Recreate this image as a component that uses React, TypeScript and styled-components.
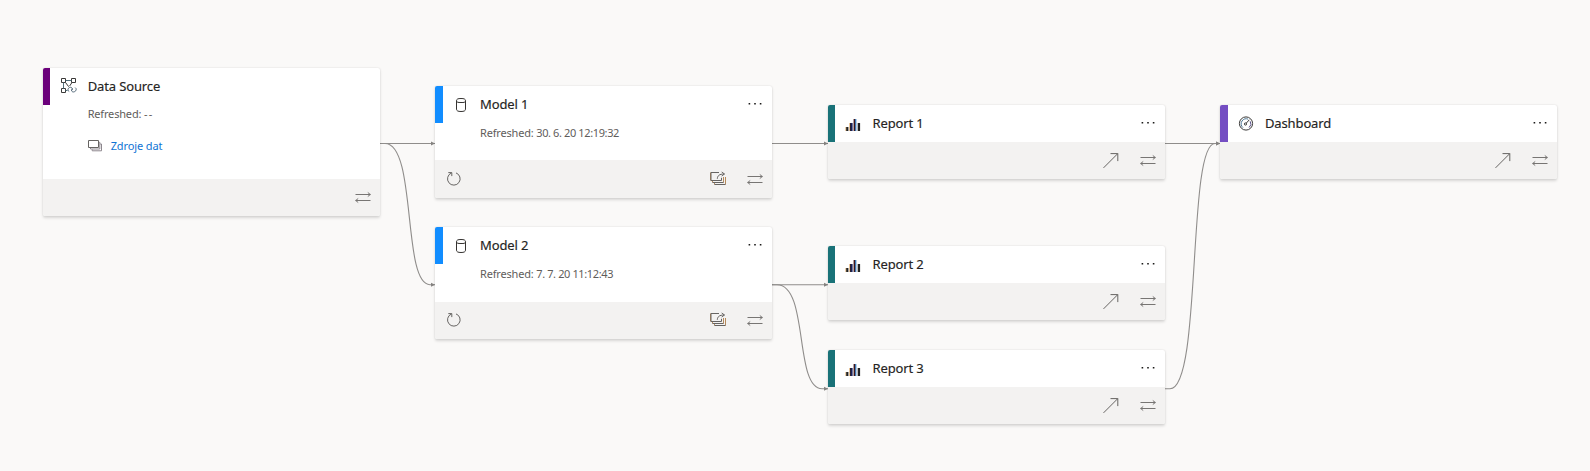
import React from "react";
import styled, { createGlobalStyle } from "styled-components";

const GlobalStyle = createGlobalStyle`
  * { box-sizing: border-box; }
  body { margin: 0; background: #faf9f8; }
`;

const Canvas = styled.main`
  position: relative;
  width: 1590px;
  height: 471px;
  overflow: hidden;
  background: #faf9f8;
  font-family: "Noto Sans", "Open Sans", sans-serif;
`;

const Links = styled.svg`
  position: absolute;
  inset: 0;
  fill: none;
  stroke: #8f8d8b;
  stroke-width: 1.1;
`;

const Card = styled.article<{ $x: number; $y: number; $h: number }>`
  position: absolute;
  left: ${(p) => p.$x}px;
  top: ${(p) => p.$y}px;
  width: 337px;
  height: ${(p) => p.$h}px;
  display: flex;
  flex-direction: column;
  overflow: hidden;
  border-radius: 2px;
  background: #fff;
  box-shadow: 0 1.5px 3px rgba(0, 0, 0, 0.14), 0 0 1.5px rgba(0, 0, 0, 0.1);
`;

const Header = styled.header`
  display: flex;
  flex: 0 0 37px;
  height: 37px;
`;

const Accent = styled.span<{ $color: string }>`
  width: 7.5px;
  background: ${(p) => p.$color};
`;

const TypeIcon = styled.span`
  display: flex;
  align-items: center;
  justify-content: center;
  width: 37.5px;
  padding-right: 1.5px;
`;

const Title = styled.h2`
  flex: 1;
  margin: 0;
  color: #252423;
  font-size: 13px;
  font-weight: 400;
  letter-spacing: -0.13px;
  line-height: 37px;
  white-space: nowrap;
  -webkit-text-stroke: 0.15px #252423;
`;

const Action = styled.button`
  display: flex;
  align-items: center;
  justify-content: center;
  width: 33px;
  height: 36px;
  padding: 0 1px 0 0;
  border: 0;
  background: none;
`;

const Details = styled.div<{ $raised: boolean }>`
  flex: 1;
  margin-top: ${(p) => (p.$raised ? -1 : 0)}px;
  padding-left: 45px;
`;

const Refreshed = styled.p`
  margin: 0;
  color: #5f5d5b;
  font-size: 11px;
  letter-spacing: -0.18px;
  line-height: 20px;
  white-space: nowrap;
`;

const Timestamp = styled.time<{ $empty: boolean }>`
  letter-spacing: ${(p) => (p.$empty ? 1.2 : -0.38)}px;
`;

const SourceLink = styled.a`
  display: flex;
  align-items: center;
  gap: 9px;
  margin-top: 12px;
  color: #1074d4;
  font-size: 11px;
  letter-spacing: -0.12px;
  line-height: 20px;
`;

const Footer = styled.footer<{ $h: number }>`
  display: flex;
  flex: 0 0 ${(p) => p.$h}px;
  gap: 4px;
  height: ${(p) => p.$h}px;
  align-items: flex-end;
  padding: 0 0 1px 3px;
  background: #f3f2f1;
`;

const Spacer = styled.span`
  flex: 1;
`;

const Glyph = styled.svg<{ $color?: string }>`
  display: block;
  flex: none;
  overflow: visible;
  fill: none;
  stroke: ${(p) => p.$color ?? "#666462"};
  stroke-width: 1;
`;

const SourceIcon = () => (
  <Glyph width="16" height="16" $color="#3b3a39">
    <g transform="translate(1 0)">
      <path d="M.5.5h4v4h-4zM10.5.5h4v4h-4zM.5 10.5h4v4h-4z" />
      <path d="M4.5 2.5h6M2.5 4.5v6M4.5 12.5h2" stroke="#52707c" />
      <path d="M4.5 4.5l3.2 4.2M11 4.5L8.6 8" />
      <path d="M8.2 13.5c-1.7-.6-1.7-3 .1-3.9 1.5-.8 3 0 3 1.4 0 .8-.6 1.3-1.3 1.6M14.2 9.6c1.5 1 1.3 3.2-.5 4-1.5.8-3 .2-3.1-1.2 0-.8.5-1.4 1.2-1.7" stroke="#526878" />
    </g>
  </Glyph>
);

const ModelIcon = () => (
  <Glyph width="12" height="14" $color="#353331">
    <path d="M1.5 2.8v8.4M10.5 2.8v8.4" />
    <path d="M1.5 2.8C1.5 1 3 .5 6 .5s4.5.5 4.5 2.3S9 4.5 6 4.5s-4.5-.1-4.5-1.7M1.5 11.2c0 1.6 1.5 2.3 4.5 2.3s4.5-.7 4.5-2.3" />
  </Glyph>
);

const ReportIcon = () => (
  <Glyph width="16" height="14">
    <g stroke="none" transform="translate(0 1)">
      <path fill="#d99f58" d="M.5 9h.8v4H.5zM4.4 5h.7v8h-.7z" />
      <path fill="#242322" d="M1.2 9h2.2v4H1.2zM12.7 5h2.4v8h-2.4z" />
      <path fill="#33241f" d="M5 5h1v8H5z" />
      <path fill="#17215d" d="M5.8 5h1.8v8H5.8z" />
      <path fill="#41151a" d="M8.6 1h1.6v12H8.6z" />
      <path fill="#1765ae" d="M10.2 1h1.1v12h-1.1z" />
    </g>
  </Glyph>
);

const GaugeIcon = () => (
  <Glyph width="16" height="16" $color="#3b3a39">
    <circle cx="8" cy="7.5" r="6.6" />
    <path d="M5 11.6A4.8 4.8 0 0 1 4 5c1.5-2.3 4-2.8 6.2-1.8" stroke="#4f7896" />
    <path d="M12.2 5.3a4.8 4.8 0 0 1-1.2 6.2" stroke="#5b528a" />
    <circle cx="7.5" cy="8" r="1.1" />
    <path d="M8.3 7.1l3-3.3" />
  </Glyph>
);

const MoreIcon = () => (
  <Glyph width="14" height="2">
    <path stroke="none" fill="#1b1a19" d="M.6 0h1.6v1.5H.6zM6.2 0h1.6v1.5H6.2zM11.8 0h1.6v1.5h-1.6z" />
  </Glyph>
);

const LineageIcon = () => (
  <Glyph width="16" height="10" $color="#777573">
    <path d="M.5 2.5h15M12.8.5l2.5 2-2.5 2M15.5 8.5h-15M3.2 6.5l-2.5 2 2.5 2" />
  </Glyph>
);

const OpenIcon = () => (
  <Glyph width="16" height="14">
    <path d="M.5 14.9L14.7.7M7.5.6h7.3v7.5" />
  </Glyph>
);

const RefreshIcon = () => (
  <Glyph width="14" height="14">
    <path d="M4.4 1A6.3 6.3 0 1 0 9 .9M1.3.6h3.5v3.5" />
  </Glyph>
);

const ImpactIcon = () => (
  <Glyph width="16" height="14">
    <path d="M.5.5v8M2.5 8.5v2M13.5 10.5V5M4.5 10.5v2M15.5 12.5V5" stroke="#b58a5c" />
    <path d="M9 .5H1v8h10.5V5.8M2.5 10.5h11M4.5 12.5h11" />
    <path d="M7.3 6.8c.2-3 1.8-4.8 7-4.8M11.7 0l2.8 2-2.8 2" />
  </Glyph>
);

const StackIcon = () => (
  <Glyph width="14" height="12">
    <path d="M2.5 7.7v1.3h9.3V2.3h-1.2M4.2 9.4v1.4h9.3V4h-1.4" stroke="#8d878e" />
    <path d="M.5.5h10v7H.5z" />
  </Glyph>
);

type Kind = "source" | "model" | "report" | "dashboard";

const kinds = {
  source: { color: "#6b007b", icon: <SourceIcon /> },
  model: { color: "#118dff", icon: <ModelIcon /> },
  report: { color: "#197278", icon: <ReportIcon /> },
  dashboard: { color: "#744ec2", icon: <GaugeIcon /> },
};

interface NodeProps {
  kind: Kind;
  title: string;
  x: number;
  y: number;
  h: number;
  footer?: number;
  refreshed?: string;
  link?: string;
}

function Node({ kind, title, x, y, h, footer = 37, refreshed, link }: NodeProps) {
  return (
    <Card $x={x} $y={y} $h={h}>
      <Header>
        <Accent $color={kinds[kind].color} />
        <TypeIcon>{kinds[kind].icon}</TypeIcon>
        <Title>{title}</Title>
        {kind !== "source" && <Action aria-label="More options"><MoreIcon /></Action>}
      </Header>
      {refreshed && (
        <Details $raised={kind === "source"}>
          <Refreshed>Refreshed: <Timestamp $empty={refreshed === "--"}>{refreshed}</Timestamp></Refreshed>
          {link && <SourceLink><StackIcon />{link}</SourceLink>}
        </Details>
      )}
      <Footer $h={footer}>
        {kind === "model" && <Action aria-label="Refresh"><RefreshIcon /></Action>}
        <Spacer />
        {kind === "model" && <Action aria-label="Impact"><ImpactIcon /></Action>}
        {(kind === "report" || kind === "dashboard") && <Action aria-label="Open"><OpenIcon /></Action>}
        <Action aria-label="Show lineage"><LineageIcon /></Action>
      </Footer>
    </Card>
  );
}

const paths = [
  "M380 143.5H435",
  "M380 143.5h5C417 143.5 402 284.7 430 284.7H435",
  "M772 143.5H828",
  "M772 284.7H828",
  "M772 284.7h5C809 284.7 794 388.7 822 388.7H828",
  "M1165 143.5H1220",
  "M1165 388.7h5C1202 388.7 1187 143.5 1215 143.5H1220",
];

export default function App() {
  return (
    <>
      <GlobalStyle />
      <Canvas>
        <Links width="1590" height="471">
          <defs>
            <marker id="arrow" markerUnits="userSpaceOnUse" markerWidth="5" markerHeight="5" refX="4.5" refY="2.5" orient="auto">
              <path d="M0 .3L4.5 2.5L0 4.7z" fill="#858381" stroke="none" />
            </marker>
          </defs>
          {paths.map((d) => <path key={d} d={d} markerEnd="url(#arrow)" />)}
        </Links>
        <Node kind="source" title="Data Source" x={42.7} y={67.5} h={148.5} refreshed="--" link="Zdroje dat" />
        <Node kind="model" title="Model 1" x={435} y={86} h={112} footer={38} refreshed="30. 6. 20 12:19:32" />
        <Node kind="model" title="Model 2" x={435} y={227} h={112} refreshed="7. 7. 20 11:12:43" />
        <Node kind="report" title="Report 1" x={827.5} y={105} h={74} />
        <Node kind="report" title="Report 2" x={827.5} y={246} h={74} />
        <Node kind="report" title="Report 3" x={827.5} y={350} h={74} />
        <Node kind="dashboard" title="Dashboard" x={1220} y={105} h={74} />
      </Canvas>
    </>
  );
}
